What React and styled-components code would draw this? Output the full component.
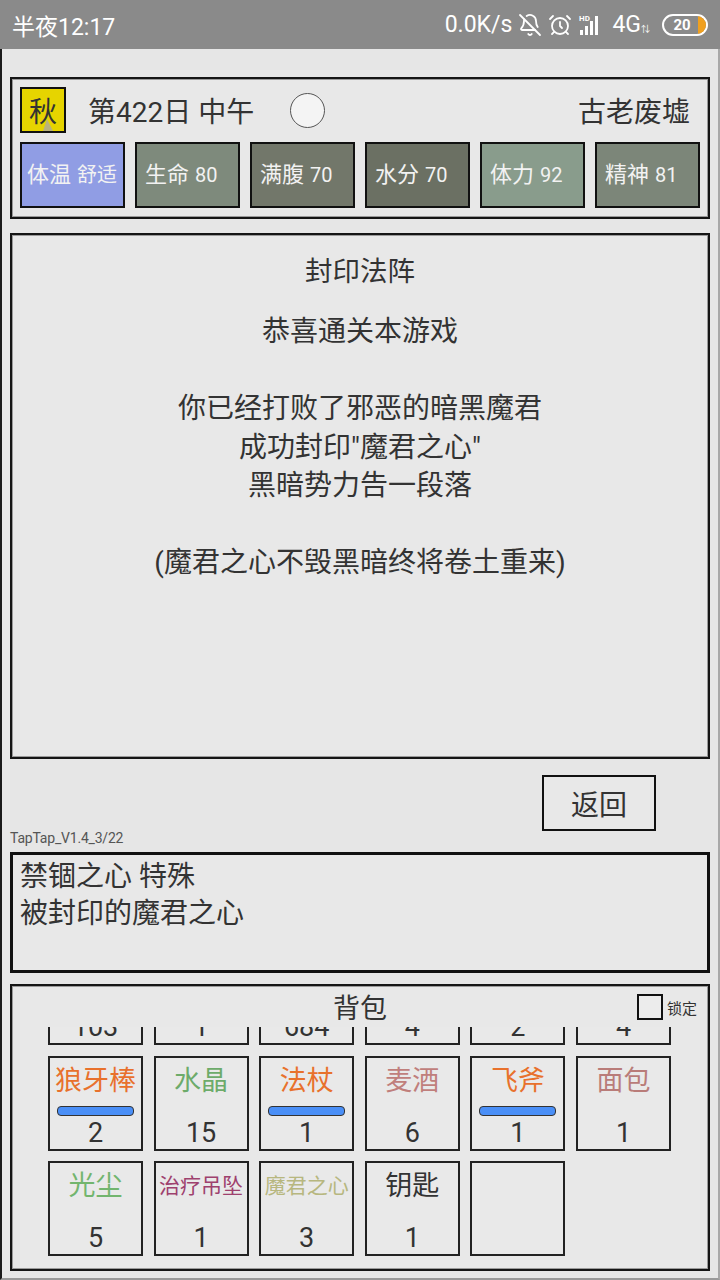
import React from 'react';
import styled, { createGlobalStyle } from 'styled-components';
import { BellOff, AlarmClock } from 'lucide-react';

const GlobalStyle = createGlobalStyle`
  html, body {
    margin: 0;
    padding: 0;
    background: #e6e6e6;
    font-family: "Roboto", "Noto Sans CJK SC", sans-serif;
    color: #333;
  }
  * { box-sizing: border-box; }
`;

const StatusBar = styled.div`
  height: 49px;
  background: #8a8a8a;
  color: #fff;
  display: flex;
  align-items: center;
  padding: 0 12px;
  font-size: 23px;
`;

const StatusRight = styled.div`
  margin-left: auto;
  display: flex;
  align-items: center;
  gap: 6px;
`;

const Battery = styled.div`
  margin-left: 6px;
  width: 46px;
  height: 22px;
  border: 2px solid #fff;
  border-radius: 11px;
  display: flex;
  align-items: center;
  overflow: hidden;
  font-size: 15px;
  font-weight: 700;
  span {
    flex: 1;
    text-align: center;
    padding-left: 2px;
  }
  i {
    width: 8px;
    height: 100%;
    background: #f0a020;
  }
`;

const Frame = styled.div`
  height: 1231px;
  border-left: 2px solid #1a1a1a;
  border-right: 2px solid #a8a8a8;
  border-bottom: 2px solid #999;
  padding: 28px 8px 0;
  display: flex;
  flex-direction: column;
`;

const Panel = styled.div`
  border: 2px solid #151515;
  box-shadow: inset 0 0 0 1px #9a9a9a;
  background: #e8e8e8;
`;

const TopPanel = styled(Panel)`
  height: 142px;
  padding: 8px 8px 0 8px;
`;

const TopRow = styled.div`
  display: flex;
  align-items: center;
  height: 46px;
`;

const Season = styled.div`
  position: relative;
  width: 46px;
  height: 46px;
  background: #e6d400;
  border: 2px solid #111;
  display: flex;
  align-items: center;
  justify-content: center;
  font-size: 28px;
  svg {
    position: absolute;
    left: 0;
    top: 0;
  }
  span { position: relative; }
`;

const DayText = styled.div`
  width: 202px;
  margin-left: 22px;
  font-size: 28px;
`;

const Sun = styled.div`
  width: 35px;
  height: 35px;
  border-radius: 50%;
  background: #f4f4f4;
  border: 1px solid #555;
`;

const Place = styled.div`
  margin-left: auto;
  margin-right: 10px;
  font-size: 28px;
`;

const StatRow = styled.div`
  display: flex;
  gap: 10px;
  margin-top: 9px;
`;

const Stat = styled.div`
  width: 105px;
  height: 66px;
  border: 2px solid #111;
  background: ${p => p.bg};
  color: #f2f2f2;
  display: flex;
  align-items: center;
  padding-left: ${p => (p.tight ? 5 : 8)}px;
  white-space: nowrap;
`;

const StatLabel = styled.span`
  font-size: 22px;
  line-height: 30px;
`;

const StatValue = styled.span`
  font-size: 20px;
  margin-left: 6px;
`;

const MainPanel = styled(Panel)`
  margin-top: 14px;
  height: 526px;
  padding-top: 18px;
  text-align: center;
`;

const MainTitle = styled.div`
  font-size: 27.5px;
  line-height: 38px;
`;

const MainBody = styled.div`
  margin-top: 22px;
  font-size: 28px;
  line-height: 38.5px;
  white-space: pre-line;
`;

const ButtonRow = styled.div`
  display: flex;
  justify-content: flex-end;
  padding-right: 54px;
  margin-top: 16px;
`;

const BackButton = styled.button`
  width: 114px;
  height: 56px;
  border: 2px solid #111;
  background: #e8e8e8;
  font-family: inherit;
  font-size: 28px;
  color: #333;
  padding: 0;
`;

const Version = styled.div`
  font-size: 14px;
  line-height: 14px;
  color: #555;
  letter-spacing: -0.2px;
`;

const DescBox = styled.div`
  margin-top: 7px;
  height: 121px;
  border: 3px solid #111;
  background: #e8e8e8;
  padding: 3px 7px 0;
  font-size: 28px;
  line-height: 37px;
`;

const BagPanel = styled(Panel)`
  margin-top: 11px;
  height: 287px;
  padding-top: 8px;
  display: flex;
  flex-direction: column;
`;

const BagHeader = styled.div`
  display: grid;
  grid-template-columns: 1fr auto 1fr;
  align-items: start;
  height: 30px;
`;

const BagTitle = styled.div`
  font-size: 27px;
  line-height: 30px;
`;

const LockBox = styled.label`
  justify-self: end;
  margin-right: 11px;
  display: flex;
  align-items: center;
  font-size: 15px;
  gap: 4px;
  i {
    width: 26px;
    height: 26px;
    border: 2px solid #111;
    background: #ececec;
  }
`;

const BagViewport = styled.div`
  margin-top: 3px;
  flex: 1;
  overflow: hidden;
`;

const Grid = styled.div`
  margin-top: -77px;
  padding-left: 36px;
  display: grid;
  grid-template-columns: repeat(6, 95px);
  grid-auto-rows: 95px;
  column-gap: 10.6px;
  row-gap: 10.5px;
`;

const Cell = styled.div`
  border: 2px solid #222;
  background: #e9e9e9;
  display: flex;
  flex-direction: column;
  align-items: center;
`;

const ItemName = styled.div`
  margin-top: 8px;
  height: 30px;
  line-height: 30px;
  font-size: ${p => (p.small ? 21 : 27)}px;
  color: ${p => p.color};
  white-space: nowrap;
`;

const BarSlot = styled.div`
  height: 23px;
  width: 100%;
  display: flex;
  justify-content: center;
`;

const Durability = styled.div`
  margin-top: 10px;
  width: 77px;
  height: 10px;
  border: 1px solid #333;
  border-radius: 4px;
  background: #4a8ff7;
`;

const Count = styled.div`
  font-size: 27px;
  line-height: 28px;
  color: #333;
`;

const stats = [
  { label: '体温', value: '舒适', bg: '#909de4', tight: true },
  { label: '生命', value: '80', bg: '#7e8a7c' },
  { label: '满腹', value: '70', bg: '#72776a' },
  { label: '水分', value: '70', bg: '#6b7063' },
  { label: '体力', value: '92', bg: '#899c8c' },
  { label: '精神', value: '81', bg: '#7c8679' },
];

const ORANGE = '#e8712c';
const items = [
  { name: '', count: 103, color: '#333' },
  { name: '', count: 1, color: '#333' },
  { name: '', count: 684, color: '#333' },
  { name: '', count: 4, color: '#333' },
  { name: '', count: 2, color: '#333' },
  { name: '', count: 4, color: '#333' },
  { name: '狼牙棒', count: 2, color: ORANGE, bar: true },
  { name: '水晶', count: 15, color: '#6dab6a' },
  { name: '法杖', count: 1, color: ORANGE, bar: true },
  { name: '麦酒', count: 6, color: '#c07f7c' },
  { name: '飞斧', count: 1, color: ORANGE, bar: true },
  { name: '面包', count: 1, color: '#b97c79' },
  { name: '光尘', count: 5, color: '#72b56e' },
  { name: '治疗吊坠', count: 1, color: '#9e416e', small: true },
  { name: '魔君之心', count: 3, color: '#b7b77f', small: true },
  { name: '钥匙', count: 1, color: '#333' },
  { empty: true },
];

const SignalIcon = () => (
  <svg width="28" height="24" viewBox="0 0 28 24">
    <text x="1" y="8" fontSize="8" fill="#fff" fontFamily="Roboto" fontWeight="700">HD</text>
    <rect x="2" y="17" width="3" height="5" fill="#fff" />
    <rect x="7" y="13" width="3" height="9" fill="#fff" />
    <rect x="12" y="8" width="3" height="14" fill="#fff" />
    <rect x="17" y="3" width="3" height="19" fill="#fff" />
  </svg>
);

export default function App() {
  return (
    <>
      <GlobalStyle />
      <StatusBar>
        半夜12:17
        <StatusRight>
          <span>0.0K/s</span>
          <BellOff size={24} strokeWidth={1.8} />
          <AlarmClock size={24} strokeWidth={1.8} />
          <SignalIcon />
          <span>4G<small style={{ fontSize: 9 }}>⇅</small></span>
          <Battery>
            <span>20</span>
            <i />
          </Battery>
        </StatusRight>
      </StatusBar>
      <Frame>
        <TopPanel>
          <TopRow>
            <Season>
              <svg width="42" height="42" viewBox="0 0 42 42">
                <polygon points="25,30 21,42 31,42" fill="#b9b27c" />
              </svg>
              <span>秋</span>
            </Season>
            <DayText>第422日 中午</DayText>
            <Sun />
            <Place>古老废墟</Place>
          </TopRow>
          <StatRow>
            {stats.map(s => (
              <Stat key={s.label} bg={s.bg} tight={s.tight}>
                <StatLabel>
                  {s.label}
                  <StatValue>{s.value}</StatValue>
                </StatLabel>
              </Stat>
            ))}
          </StatRow>
        </TopPanel>

        <MainPanel>
          <MainTitle>封印法阵</MainTitle>
          <MainBody>
            {'恭喜通关本游戏\n\n你已经打败了邪恶的暗黑魔君\n成功封印"魔君之心"\n黑暗势力告一段落\n\n(魔君之心不毁黑暗终将卷土重来)'}
          </MainBody>
        </MainPanel>

        <ButtonRow>
          <BackButton>返回</BackButton>
        </ButtonRow>
        <Version>TapTap_V1.4_3/22</Version>

        <DescBox>
          禁锢之心 特殊
          <br />
          被封印的魔君之心
        </DescBox>

        <BagPanel>
          <BagHeader>
            <span />
            <BagTitle>背包</BagTitle>
            <LockBox>
              <i />
              锁定
            </LockBox>
          </BagHeader>
          <BagViewport>
            <Grid>
              {items.map((it, i) =>
                it.empty ? (
                  <Cell key={i} />
                ) : (
                  <Cell key={i}>
                    <ItemName color={it.color} small={it.small}>{it.name}</ItemName>
                    <BarSlot>{it.bar && <Durability />}</BarSlot>
                    <Count>{it.count}</Count>
                  </Cell>
                )
              )}
            </Grid>
          </BagViewport>
        </BagPanel>
      </Frame>
    </>
  );
}
